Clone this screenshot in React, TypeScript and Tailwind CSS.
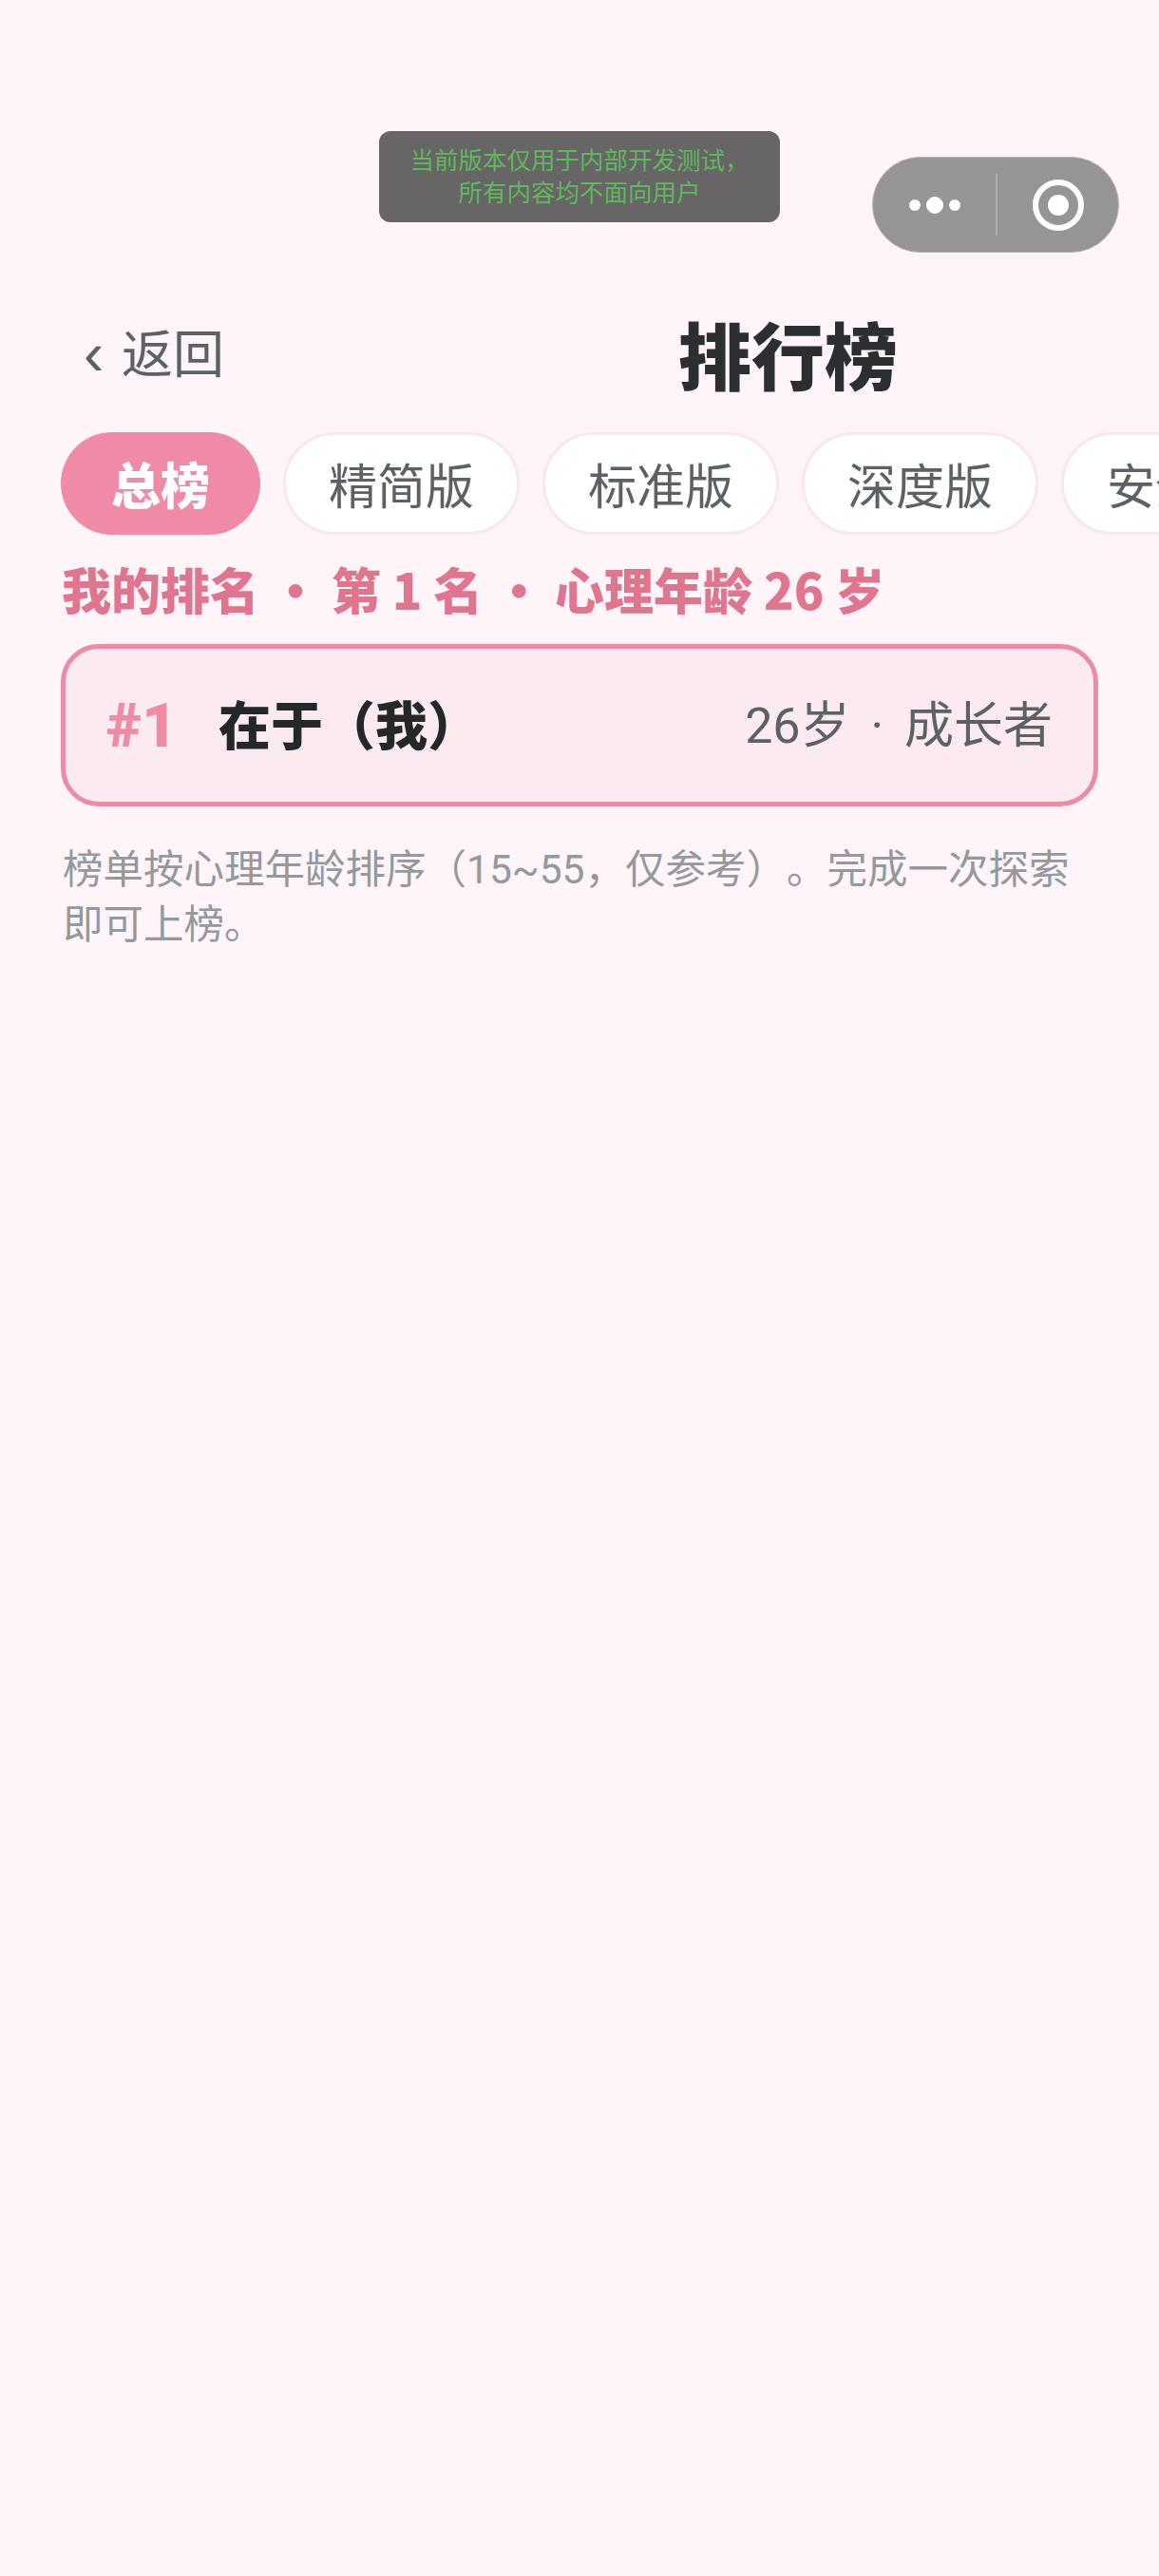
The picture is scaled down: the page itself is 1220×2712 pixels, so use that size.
const tabs = ["总榜", "精简版", "标准版", "深度版", "安全版"];
const cjk = "font-['Roboto','Noto_Sans_CJK_SC',sans-serif] [text-spacing-trim:space-all]";

function DevToast() {
  return (
    <div className="absolute left-[399px] top-[138px] w-[422px] h-[96px] rounded-[12px] bg-[#676566] flex flex-col items-center justify-center text-[25.5px] leading-[34px] text-[#5fb85c]">
      <span>当前版本仅用于内部开发测试，</span>
      <span>所有内容均不面向用户</span>
    </div>
  );
}

function Capsule() {
  return (
    <div className="absolute left-[918px] top-[165px] w-[260px] h-[101px] rounded-full bg-[#979494] border border-[#b5b2b3] flex items-center">
      <div className="w-[129px] flex items-center justify-center gap-[6px] pl-[1px]">
        <span className="w-[12px] h-[12px] rounded-full bg-white" />
        <span className="w-[18px] h-[18px] rounded-full bg-white" />
        <span className="w-[12px] h-[12px] rounded-full bg-white" />
      </div>
      <div className="w-[2px] h-[65px] bg-[#b0adae]" />
      <div className="flex-1 flex items-center justify-center">
        <svg width="54" height="54" viewBox="0 0 54 54">
          <circle cx="27" cy="27" r="24" fill="none" stroke="#fff" strokeWidth="6" />
          <circle cx="27" cy="27" r="11" fill="#fff" />
        </svg>
      </div>
    </div>
  );
}

export default function App() {
  return (
    <div className={`relative w-full min-h-[2712px] bg-[#fff5f8] overflow-hidden ${cjk}`}>
      <DevToast />
      <Capsule />

      <div className="pt-[322px] flex flex-col">
        <div className="flex items-center h-[100px] pl-[88px]">
          <span className="text-[#5c6166] text-[64px] leading-none w-[40px] font-['Liberation_Sans']">‹</span>
          <span className="mt-[6px] text-[#5c6166] text-[54px] leading-none">返回</span>
          <h1 className="mt-[14px] ml-[478px] text-[77px] leading-none font-black text-[#2b2f31]">排行榜</h1>
        </div>

        <div className="mt-[33px] pl-[64px] flex gap-[24px] overflow-hidden">
          {tabs.map((t, i) =>
            i === 0 ? (
              <div key={t} className="shrink-0 h-[108px] w-[210px] pt-[10px] rounded-full bg-[#ef8ba6] flex items-center justify-center text-[52px] font-black text-white">
                {t}
              </div>
            ) : (
              <div key={t} className="shrink-0 h-[108px] w-[249px] pt-[10px] rounded-full bg-white border-[3px] border-[#fbe6ec] flex items-center justify-center text-[51px] text-[#5c6166]">
                {t}
              </div>
            )
          )}
        </div>

        <div className="mt-[22px] pl-[65px] text-[52px] leading-[70px] font-black text-[#e0758f] whitespace-pre font-['Noto_Sans_CJK_SC',sans-serif]">
          我的排名 ・ 第 1 名 ・ 心理年龄 26 岁
        </div>

        <div className="mt-[23px] mx-[64px] h-[171px] rounded-[40px] border-[5px] border-[#ec8ba5] bg-[#fbeaf0] flex items-center pl-[43px] pr-[43px] pt-[3px]">
          <span className="w-[118px] text-[64px] font-black text-[#ef8ba6]">#1</span>
          <span className="text-[55px] font-black text-[#25282a]">在于（我）</span>
          <span className="ml-auto text-[52px] text-[#5c6166]">
            26岁<span className="mx-[9px]"> · </span>成长者
          </span>
        </div>

        <p className="mt-[38px] mx-[66px] text-[42.5px] leading-[58px] text-[#94999d]">
          榜单按心理年龄排序（15~55，仅参考）。完成一次探索即可上榜。
        </p>
      </div>
    </div>
  );
}
